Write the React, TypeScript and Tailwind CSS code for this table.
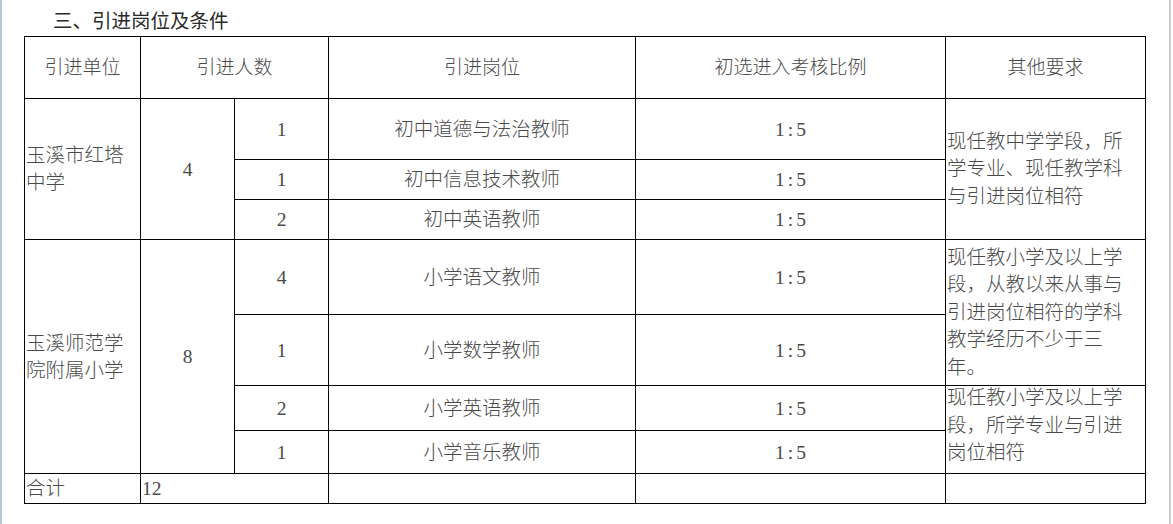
const cell = "border border-black px-[1px] align-middle";

type Sub = { count: string; post: string };

type Unit = {
  name: string[];
  total: string;
  subs: Sub[];
  heights: number[];
};

const units: Unit[] = [
  {
    name: ["玉溪市红塔", "中学"],
    total: "4",
    subs: [
      { count: "1", post: "初中道德与法治教师" },
      { count: "1", post: "初中信息技术教师" },
      { count: "2", post: "初中英语教师" },
    ],
    heights: [61, 40, 40],
  },
  {
    name: ["玉溪师范学", "院附属小学"],
    total: "8",
    subs: [
      { count: "4", post: "小学语文教师" },
      { count: "1", post: "小学数学教师" },
      { count: "2", post: "小学英语教师" },
      { count: "1", post: "小学音乐教师" },
    ],
    heights: [75, 71, 45, 43],
  },
];

const rowH: Record<number, string> = {
  61: "h-[61px]",
  40: "h-[40px]",
  75: "h-[75px]",
  71: "h-[71px]",
  45: "h-[45px]",
  43: "h-[43px]",
};

function Req({ lines, className = "" }: { lines: string[]; className?: string }) {
  return (
    <div className={`leading-[27.5px] ${className}`}>
      {lines.map((l, i) => (
        <div key={i}>{l}</div>
      ))}
    </div>
  );
}

export default function App() {
  return (
    <div className="flex w-[1173px] h-[524px] bg-white">
      <div className="w-[2px] h-full bg-[#b9c6d3]" />
      <div className="flex-1 pl-[22px]">
        <div className="pt-[6px] pl-[29px] h-[36px] text-[19.5px] leading-[28px] text-[#2a2a2a] font-['Noto_Sans_CJK_SC',sans-serif]">
          三、引进岗位及条件
        </div>
        <table className="table-fixed border-collapse w-[1121px] text-[#4a4a4a] font-light text-[19.5px] leading-[27px] font-['Liberation_Serif','Noto_Sans_CJK_SC',serif]">
          <colgroup>
            <col className="w-[116px]" />
            <col className="w-[94px]" />
            <col className="w-[94px]" />
            <col className="w-[307px]" />
            <col className="w-[310px]" />
            <col className="w-[200px]" />
          </colgroup>
          <tbody>
            <tr className="h-[62px] text-[19px]">
              <td className={`${cell} text-center`}>引进单位</td>
              <td className={`${cell} text-center`} colSpan={2}>
                引进人数
              </td>
              <td className={`${cell} text-center`}>引进岗位</td>
              <td className={`${cell} text-center`}>初选进入考核比例</td>
              <td className={`${cell} text-center`}>其他要求</td>
            </tr>

            {units.map((u, ui) =>
              u.subs.map((s, si) => (
                <tr key={`${ui}-${si}`} className={rowH[u.heights[si]]}>
                  {si === 0 && (
                    <>
                      <td className={cell} rowSpan={u.subs.length}>
                        {u.name.map((n, i) => (
                          <div key={i}>{n}</div>
                        ))}
                      </td>
                      <td className={`${cell} text-center`} rowSpan={u.subs.length}>
                        {u.total}
                      </td>
                    </>
                  )}
                  <td className={`${cell} text-center`}>{s.count}</td>
                  <td className={`${cell} text-center`}>{s.post}</td>
                  <td className={`${cell} text-center tracking-[3px] pl-[4px]`}>1:5</td>
                  {ui === 0 && si === 0 && (
                    <td className={cell} rowSpan={3}>
                      <Req lines={["现任教中学学段，所", "学专业、现任教学科", "与引进岗位相符"]} />
                    </td>
                  )}
                  {ui === 1 && si === 0 && (
                    <td className={cell} rowSpan={2}>
                      <Req
                        lines={[
                          "现任教小学及以上学",
                          "段，从教以来从事与",
                          "引进岗位相符的学科",
                          "教学经历不少于三",
                          "年。",
                        ]}
                      />
                    </td>
                  )}
                  {ui === 1 && si === 2 && (
                    <td className={`${cell} align-top`} rowSpan={2}>
                      <Req className="-mt-[2px]" lines={["现任教小学及以上学", "段，所学专业与引进", "岗位相符"]} />
                    </td>
                  )}
                </tr>
              ))
            )}

            <tr className="h-[30px]">
              <td className={cell}>合计</td>
              <td className={cell} colSpan={2}>
                12
              </td>
              <td className={cell}></td>
              <td className={cell}></td>
              <td className={cell}></td>
            </tr>
          </tbody>
        </table>
      </div>
      <div className="w-[2px] h-full bg-[#c6ced6]" />
      <div className="w-[2px] h-full" />
    </div>
  );
}
